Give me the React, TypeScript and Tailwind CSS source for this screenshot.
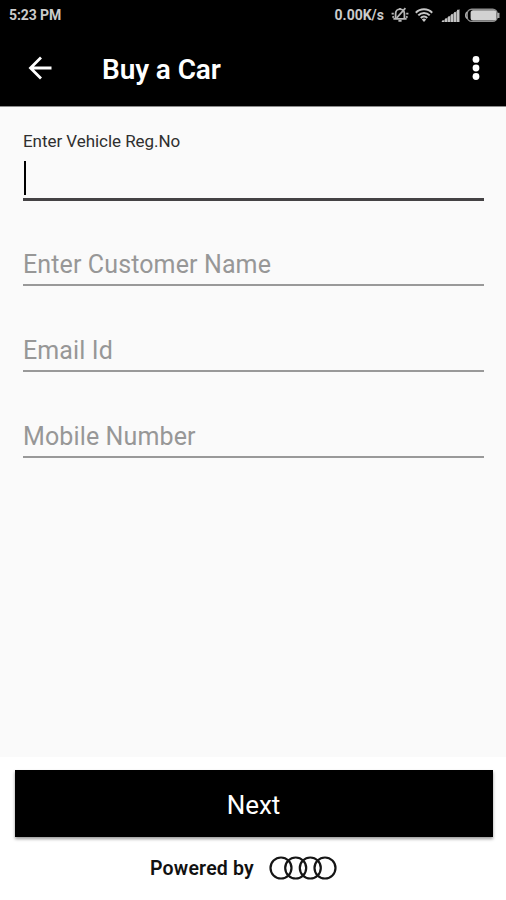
const fields = ["Enter Customer Name", "Email Id", "Mobile Number"];

function SilentIcon() {
  return (
    <svg width="18" height="18" viewBox="0 0 18 18" fill="none" stroke="#b8b8b8" strokeWidth="1.8">
      <path d="M4.6 12.6V7.6a4.4 4.4 0 0 1 8.8 0v5M2.4 12.8h13.2M7.4 14.8h3.2M9 3.4V2" />
      <path d="M5.6 12L14.4 2.2" />
      <path d="M0.6 7.6h2.2M1.4 11.4l1.6-1M15.2 7.6h2.2M16.6 11.4l-1.6-1" />
    </svg>
  );
}

function WifiIcon() {
  return (
    <svg width="18" height="14" viewBox="0 0 18 14" fill="none" stroke="#c8c8c8" strokeWidth="2">
      <path d="M0.8 4.7a11.6 11.6 0 0 1 16.4 0M3.3 7.4a8 8 0 0 1 11.4 0M5.8 10a4.4 4.4 0 0 1 6.4 0" />
      <path d="M9 14l-2.2-2.4a3 3 0 0 1 4.4 0z" fill="#c8c8c8" stroke="none" />
    </svg>
  );
}

function SignalIcon() {
  return (
    <svg width="19" height="13" viewBox="0 0 19 13" fill="#c4c4c4">
      <path d="M0 13L18.6 0V13z" fill="#777777" />
      <rect x="1" y="11.5" width="2" height="1.5" />
      <rect x="4" y="9.5" width="2" height="3.5" />
      <rect x="7" y="7.5" width="2" height="5.5" />
      <rect x="10" y="5.3" width="2" height="7.7" />
      <rect x="13" y="3.2" width="2" height="9.8" />
      <rect x="16" y="0.8" width="2.2" height="12.2" />
    </svg>
  );
}

function BatteryIcon() {
  return (
    <svg width="35" height="15" viewBox="0 0 35 15">
      <rect x="2.2" y="1.2" width="30" height="12.2" rx="4.5" fill="none" stroke="#8e8e8e" strokeWidth="1.4" />
      <rect x="5.6" y="2.2" width="25.8" height="10.2" rx="2.5" fill="#d2d2d2" />
      <path d="M2.2 4.2a4 4 0 0 0 0 6.2" fill="none" stroke="#aaaaaa" strokeWidth="1.6" />
      <path d="M33.4 4.8v5.2" fill="none" stroke="#aaaaaa" strokeWidth="2.2" />
    </svg>
  );
}

function StatusBar() {
  return (
    <div className="flex h-[30px] items-center justify-between pl-[9px] pr-[6px] text-[14px] font-bold text-[#cbcbcb]">
      <span className="tracking-[-0.1px]">5:23 PM</span>
      <div className="flex items-center">
        <span className="mr-[7px]">0.00K/s</span>
        <SilentIcon />
        <div className="ml-[6px]"><WifiIcon /></div>
        <div className="ml-[8px]"><SignalIcon /></div>
        <div className="ml-[5px]"><BatteryIcon /></div>
      </div>
    </div>
  );
}

function Header() {
  return (
    <header className="h-[107px] border-b border-[#8c8c8c] bg-black">
      <StatusBar />
      <div className="flex h-[76px] items-center pl-[28px] pr-[26px]">
        <svg width="24" height="24" viewBox="0 0 24 24" fill="none" stroke="#ffffff" strokeWidth="2.8">
          <path d="M23.5 12H3M13 1.5L2.5 12L13 22.5" />
        </svg>
        <h1 className="ml-[50px] pt-[3px] text-[28px] leading-[36px] font-semibold tracking-[-0.1px] text-white">Buy a Car</h1>
        <svg width="8" height="26" viewBox="0 0 8 26" fill="#ffffff" className="ml-auto">
          <circle cx="4" cy="4.4" r="3.4" />
          <circle cx="4" cy="13" r="3.4" />
          <circle cx="4" cy="21.5" r="3.4" />
        </svg>
      </div>
    </header>
  );
}

export default function App() {
  return (
    <div className="flex h-[900px] w-[506px] flex-col overflow-hidden bg-white font-['Roboto',sans-serif]">
      <Header />
      <main className="flex h-[650px] flex-col bg-[#fafafa] pr-[22px] pl-[23px] pt-[22px]">
        <div className="flex h-[72px] flex-col border-b-[3px] border-[#444244]">
          <label className="text-[17px] leading-[24px] tracking-[-0.05px] text-[#2f2f2f]">Enter Vehicle Reg.No</label>
          <div className="mt-[8px] ml-[0.5px] h-[34px] w-[2px] bg-black" />
        </div>
        <div className="-mt-px flex flex-col">
          {fields.map((label) => (
            <div key={label} className="mt-[36px] h-[50px] border-b-2 border-[#999999] pt-[12px] text-[25px] leading-[34px] tracking-[0.12px] text-[#979797]">
              {label}
            </div>
          ))}
        </div>
      </main>
      <footer className="flex flex-col items-center pt-[13px]">
        <button className="ml-px flex h-[67px] w-[478px] items-center justify-center bg-black pt-[3px] text-[26px] text-white shadow-[0_2px_3px_rgba(0,0,0,0.4)]">
          Next
        </button>
        <div className="mt-[16px] flex items-center pr-[19px]">
          <span className="pt-px text-[19.5px] leading-[29px] font-semibold tracking-[0.2px] text-[#111111]">Powered by</span>
          <svg width="68" height="24" viewBox="0 0 68 24" fill="none" stroke="#151515" strokeWidth="2.2" className="ml-[15px]">
            <circle cx="12" cy="12" r="10.5" />
            <circle cx="26.7" cy="12" r="10.5" />
            <circle cx="41.3" cy="12" r="10.5" />
            <circle cx="56" cy="12" r="10.5" />
          </svg>
        </div>
      </footer>
    </div>
  );
}
